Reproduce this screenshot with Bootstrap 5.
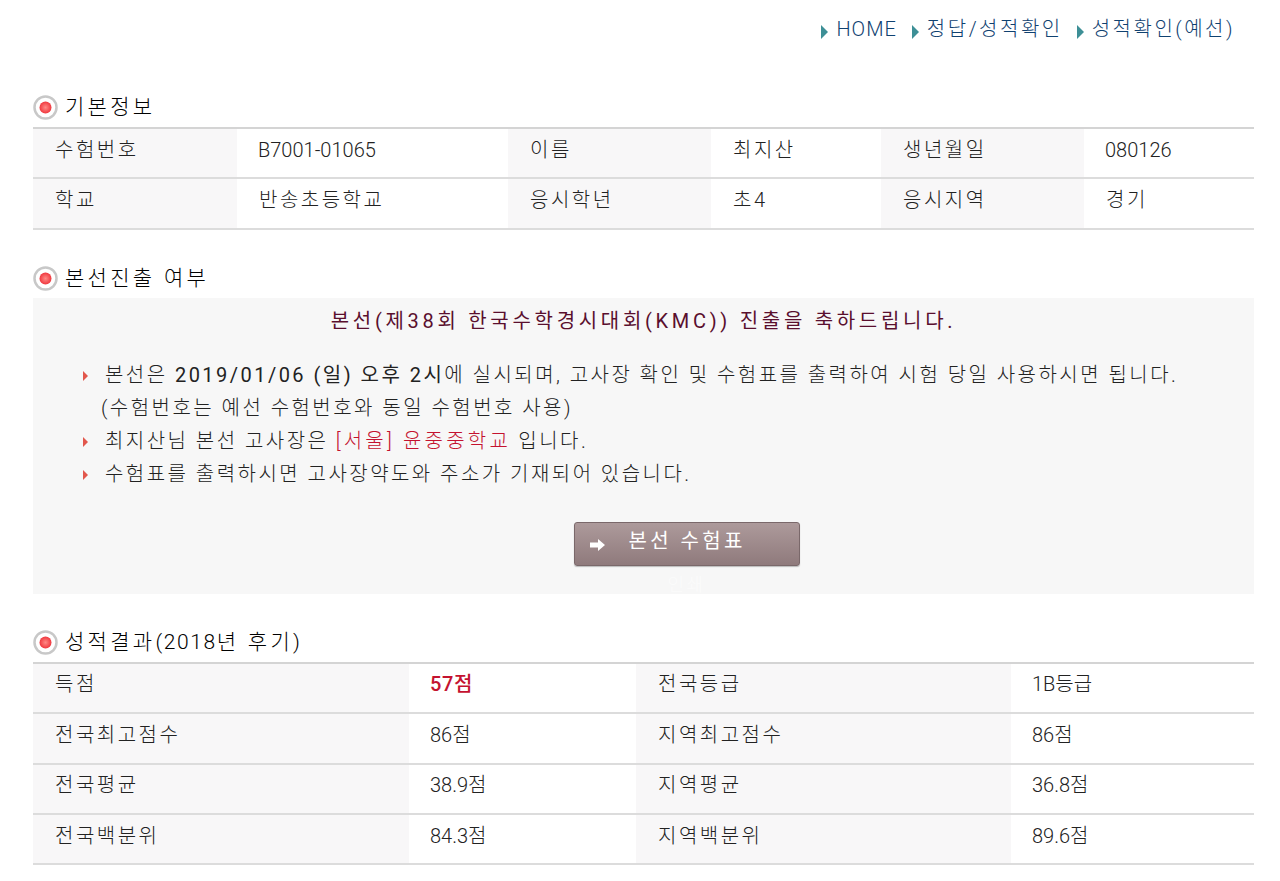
<!DOCTYPE html>
<html lang="ko">
<head>
  <meta charset="UTF-8">
  <title>성적확인(예선)</title>
  <link href="https://cdn.jsdelivr.net/npm/bootstrap@5.3.0/dist/css/bootstrap.min.css" rel="stylesheet">
  <style>
    body { font-family: Roboto, "Noto Sans CJK KR", sans-serif; font-size: 20px; font-weight: 300; color: #222; letter-spacing: 2.5px; background: #fff; overflow: hidden; }
    .page-wrap { padding: 0 26px 0 33px; }
    .crumbs { height: 95px; padding: 16px 19px 0 0; color: #0f4170; font-size: 20px; line-height: 27px; letter-spacing: 2.5px; gap: 14px; }
    .crumbs .tri { border-left: 7px solid #3d8f96; border-top-width: 7px; border-bottom-width: 7px; margin-right: 8px; position: relative; top: 3px; }
    .crumbs .eng { letter-spacing: 1px; margin-right: 1px; }
    .tri { display: inline-block; width: 0; height: 0; border-left: 6px solid #e2574c; border-top: 6px solid transparent; border-bottom: 6px solid transparent; }
    .sec-title { height: 32px; font-size: 21px; line-height: 24px; color: #000; letter-spacing: 3.3px; }
    .sec-title .tight { letter-spacing: 1.6px; }
    .dot { width: 25px; height: 25px; margin-right: 7px; }
    .info-table { table-layout: fixed; width: 100%; margin: 0; border-top: 2px solid #d4d4d4; }
    .info-table td { height: 50.4px; padding: 0 0 7px 22px; vertical-align: middle; border-bottom: 2px solid #dcdcdc; line-height: 26px; color: #222; }
    .info-table td.lbl { background: #f8f7f8; }
    .info-table td.num { letter-spacing: 0; padding-left: 21px; }
    .info-table td.score { color: #c4122f; font-weight: 500; letter-spacing: .6px; padding-left: 21px; }
    .sec-gap { margin-bottom: 36px; }
    .w-a { width: 204px; } .w-b { width: 271px; } .w-c { width: 203px; } .w-d { width: 170px; } .w-e { width: 376px; } .w-f { width: 227px; } .w-g { width: 375px; }
    .notice { background: #f7f7f7; height: 296px; margin-bottom: 36px; padding-top: 8px; color: #222; letter-spacing: 2.47px; }
    .notice-head { color: #5a0f2e; font-size: 20px; font-weight: 400; line-height: 30px; letter-spacing: 3.7px; margin-bottom: 23px; }
    .notice ul { list-style: none; margin: 0 0 31px; padding: 0 0 0 50px; line-height: 33px; }
    .notice li { position: relative; padding-left: 22px; }
    .notice li .tri { position: absolute; left: 0; top: 12px; border-left-width: 5px; border-top-width: 5px; border-bottom-width: 5px; }
    .notice .dark { color: #222; font-weight: 400; }
    .notice .hot { color: #c4122f; letter-spacing: 3.2px; }
    .indent { margin-left: -4px; }
    .btn-box { padding-left: 86px; }
    .print-btn { width: 226px; height: 44px; padding: 0 0 6px 54px; background: linear-gradient(#ad9a9b, #8f7a7c); border: 1px solid #7a686a; border-radius: 3px; color: #fff; font-size: 20px; font-weight: 400; letter-spacing: 3.4px; box-shadow: 0 1px 1px #bbb; position: relative; }
    .print-btn svg { position: absolute; left: 15px; top: 16px; }
    .ghost { color: #fbfbfb; font-size: 18px; line-height: 22px; margin-top: 8px; }
  </style>
</head>
<body>
  <div class="page-wrap">
    <div class="crumbs d-flex justify-content-end">
      <span class="eng"><i class="tri"></i>HOME</span>
      <span><i class="tri"></i>정답/성적확인</span>
      <span><i class="tri"></i>성적확인(예선)</span>
    </div>

    <div class="sec-title d-flex align-items-start">
      <svg class="dot" viewBox="0 0 25 25"><defs><radialGradient id="redDot"><stop offset="0" stop-color="#ff8a86"/><stop offset="1" stop-color="#f0383f"/></radialGradient></defs><circle cx="12.5" cy="12.5" r="11" fill="#fff" stroke="#c8c8c8" stroke-width="2.5"/><circle cx="12.5" cy="12.5" r="6" fill="url(#redDot)"/></svg>
      <span>기본정보</span>
    </div>
    <table class="info-table sec-gap">
      <colgroup><col class="w-a"><col class="w-b"><col class="w-c"><col class="w-d"><col class="w-c"><col class="w-d"></colgroup>
      <tr><td class="lbl">수험번호</td><td class="num">B7001-01065</td><td class="lbl">이름</td><td>최지산</td><td class="lbl">생년월일</td><td class="num">080126</td></tr>
      <tr><td class="lbl">학교</td><td>반송초등학교</td><td class="lbl">응시학년</td><td>초4</td><td class="lbl">응시지역</td><td>경기</td></tr>
    </table>

    <div class="sec-title d-flex align-items-start">
      <svg class="dot" viewBox="0 0 25 25"><circle cx="12.5" cy="12.5" r="11" fill="#fff" stroke="#c8c8c8" stroke-width="2.5"/><circle cx="12.5" cy="12.5" r="6" fill="url(#redDot)"/></svg>
      <span>본선진출 여부</span>
    </div>
    <div class="notice">
      <div class="notice-head text-center">본선(제38회 한국수학경시대회(KMC)) 진출을 축하드립니다.</div>
      <ul>
        <li><i class="tri"></i>본선은 <span class="dark">2019/01/06 (일) 오후 2시</span>에 실시되며, 고사장 확인 및 수험표를 출력하여 시험 당일 사용하시면 됩니다.<br><span class="indent">(수험번호는 예선 수험번호와 동일 수험번호 사용)</span></li>
        <li><i class="tri"></i>최지산님 본선 고사장은 <span class="hot">[서울] 윤중중학교</span> 입니다.</li>
        <li><i class="tri"></i>수험표를 출력하시면 고사장약도와 주소가 기재되어 있습니다.</li>
      </ul>
      <div class="text-center btn-box">
        <button type="button" class="print-btn text-start">
          <svg width="15" height="12" viewBox="0 0 15 12"><path d="M0 3.5h8V0l7 6-7 6V8.500H0z" fill="#fff"/></svg>
          본선 수험표
        </button>
        <div class="ghost">인쇄</div>
      </div>
    </div>

    <div class="sec-title d-flex align-items-start">
      <svg class="dot" viewBox="0 0 25 25"><circle cx="12.5" cy="12.5" r="11" fill="#fff" stroke="#c8c8c8" stroke-width="2.5"/><circle cx="12.5" cy="12.5" r="6" fill="url(#redDot)"/></svg>
      <span>성적결과<span class="tight">(2018</span>년 후기)</span>
    </div>
    <table class="info-table">
      <colgroup><col class="w-e"><col class="w-f"><col class="w-g"><col></colgroup>
      <tr><td class="lbl">득점</td><td class="score">57점</td><td class="lbl">전국등급</td><td class="num">1B등급</td></tr>
      <tr><td class="lbl">전국최고점수</td><td class="num">86점</td><td class="lbl">지역최고점수</td><td class="num">86점</td></tr>
      <tr><td class="lbl">전국평균</td><td class="num">38.9점</td><td class="lbl">지역평균</td><td class="num">36.8점</td></tr>
      <tr><td class="lbl">전국백분위</td><td class="num">84.3점</td><td class="lbl">지역백분위</td><td class="num">89.6점</td></tr>
    </table>
  </div>
  <script src="https://cdn.jsdelivr.net/npm/bootstrap@5.3.0/dist/js/bootstrap.bundle.min.js"></script>
</body>
</html>
